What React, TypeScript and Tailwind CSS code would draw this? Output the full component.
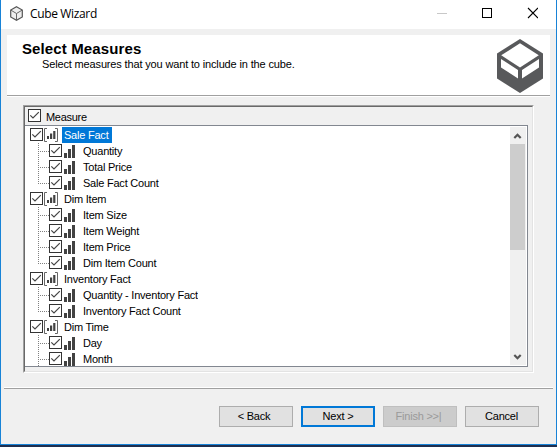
const groups = [
  { name: "Sale Fact", items: ["Quantity", "Total Price", "Sale Fact Count"], selected: true },
  { name: "Dim Item", items: ["Item Size", "Item Weight", "Item Price", "Dim Item Count"] },
  { name: "Inventory Fact", items: ["Quantity - Inventory Fact", "Inventory Fact Count"] },
  { name: "Dim Time", items: ["Day", "Month"], open: true },
];

function Check() {
  return (
    <svg width="13" height="13" viewBox="0 0 13 13" className="block shrink-0">
      <rect x="0.5" y="0.5" width="12" height="12" fill="#fff" stroke="#333" />
      <path d="M2.3 6.3 5 9 10.800 3.200" fill="none" stroke="#444" strokeWidth="1.2" />
    </svg>
  );
}

function GroupIcon() {
  return (
    <svg width="14" height="14" viewBox="0 0 14 14" className="ml-px block shrink-0">
      <path d="M3 0.5H0.5V13.5H3M11 0.5H13.5V13.5H11" fill="none" stroke="#666" />
      <path d="M3 8h2v3H3zM6 5.500h2.200v5.500H6zM9.200 3h2.200v8H9.200z" fill="#424242" />
    </svg>
  );
}

function BarsIcon() {
  return (
    <svg width="11" height="13" viewBox="0 0 11 13" className="ml-0.5 mt-px block shrink-0" shapeRendering="crispEdges">
      <path d="M0 8h3v5H0zM4 4h3v9H4zM8 0h3v13H8z" fill="#424242" />
    </svg>
  );
}

function Branch({ last }: { last: boolean }) {
  return (
    <svg width="11" height="16" viewBox="0 0 11 16" className="block shrink-0" shapeRendering="crispEdges">
      <path d={last ? "M0.5 0V9" : "M0.5 0V16"} stroke="#808080" strokeDasharray="1 1" />
      <path d="M2 8.5H11" stroke="#808080" strokeDasharray="1 1" />
    </svg>
  );
}

function Cube({ className }: { className: string }) {
  return (
    <svg viewBox="0 0 46 54" preserveAspectRatio="none" className={className}>
      <path d="M23 0 46 14.500V39.500L23 54 0 39.500V14.500Z" fill="#58595b" />
      <path d="M23 4.300 41.800 16.300 23 28.400 4.200 16.300Z" fill="#fff" />
      <path d="M4 20 21 31V39.500L4 28.500ZM42 20 25 31V39.500L42 28.500Z" fill="#fff" />
    </svg>
  );
}

export default function App() {
  return (
    <div className="flex h-[447px] w-[557px] flex-col bg-[#1f2f4f] font-['Liberation_Sans',sans-serif] text-[11px] tracking-[-0.22px] text-black">
      <div className="flex h-[445px] flex-col border border-t-0 border-[#1883d7] bg-[#f0f0f0]">
        <header className="flex h-[29px] shrink-0 items-start bg-white pt-[6px]">
          <svg width="13" height="15" viewBox="0 0 13 15" className="ml-[9px] block">
            <path d="M6.500 0.700 12.300 4V11L6.500 14.300 0.700 11V4Z" fill="#eee" stroke="#555" strokeWidth="1.200" />
            <path d="M1 4.200 6.500 7.500 12 4.200M6.500 7.500V14" fill="none" stroke="#666" />
          </svg>
          <h1 className="ml-[7px] w-[406px] font-['Open_Sans',sans-serif] text-[12px] leading-[15px] tracking-[-0.35px]">Cube Wizard</h1>
          <svg width="102" height="14" viewBox="0 0 102 14" className="block">
            <path d="M1 7.500H11" stroke="#c8c8c8" shapeRendering="crispEdges" />
            <rect x="46.500" y="2.500" width="9" height="9" fill="none" stroke="#000" shapeRendering="crispEdges" />
            <path d="M92 2 102 12M102 2 92 12" stroke="#000" strokeWidth="1.100" />
          </svg>
        </header>

        <section className="mx-[6px] mt-[6px] flex h-[62px] shrink-0 justify-between border-b border-white bg-white">
          <div className="flex h-[61px] grow justify-between border-b border-[#a0a0a0]">
            <div className="pl-[15px] pt-[6px]">
              <h2 className="text-[15px] font-bold leading-[16px] tracking-[0.12px]">Select Measures</h2>
              <p className="pl-[20px] pt-px leading-[13px] tracking-[-0.15px]">Select measures that you want to include in the cube.</p>
            </div>
            <Cube className="mr-[7px] mt-[4px] h-[54px] w-[46px]" />
          </div>
        </section>

        <main className="ml-[22px] mt-[8px] h-[268px] w-[511px] shrink-0 border border-b-white border-l-[#a0a0a0] border-r-white border-t-[#a0a0a0]">
          <div className="flex h-[266px] flex-col border border-b-[#e3e3e3] border-l-[#696969] border-r-[#e3e3e3] border-t-[#696969]">
            <div className="flex h-[18px] shrink-0 items-start pl-[3px] pt-[2px]">
              <Check />
              <span className="ml-[5px] leading-[16px] tracking-[-0.3px]">Measure</span>
            </div>
            <div className="flex h-[242px] w-[503px] justify-between border border-l-0 border-[#828790] bg-white">
              <div className="h-[240px] overflow-hidden pl-[5px] pt-px">
                {groups.map((g) => (
                  <div key={g.name}>
                    <div className="flex h-4 items-start pt-px">
                      <Check />
                      <GroupIcon />
                      <span className={`-mt-px ml-1 flex h-4 items-center pl-[2px] pr-[3px] ${g.selected ? "bg-[#0078d7] text-white" : ""}`}>
                        {g.name}
                      </span>
                    </div>
                    {g.items.map((t, i) => (
                      <div key={t} className="flex h-4 items-start pl-2">
                        <Branch last={i === g.items.length - 1 && !g.open} />
                        <div className="flex pt-px">
                          <Check />
                          <BarsIcon />
                        </div>
                        <span className="ml-[8px] leading-[16px]">{t}</span>
                      </div>
                    ))}
                  </div>
                ))}
              </div>
              <div className="mr-px mt-px flex h-[238px] w-4 flex-col bg-[#f0f0f0]">
                <svg width="16" height="17" viewBox="0 0 16 17" className="block">
                  <path d="M4.300 11 7.500 7.800 10.700 11" fill="none" stroke="#555" strokeWidth="2.200" />
                </svg>
                <div className="h-[106px] w-[15px] bg-[#cdcdcd]" />
                <svg width="16" height="17" viewBox="0 0 16 17" className="mt-auto block">
                  <path d="M4.300 7 7.500 10.200 10.700 7" fill="none" stroke="#555" strokeWidth="2.200" />
                </svg>
              </div>
            </div>
          </div>
        </main>

        <div className="mx-[3px] mt-[14px] h-[2px] shrink-0 border-b border-t border-b-[#a0a0a0] border-t-white" />
        <footer className="mt-[17px] flex justify-end gap-2 pr-[17px]">
          <button className="h-[21px] w-[74px] border border-[#adadad] bg-[#e1e1e1] pr-1">&lt; Back</button>
          <button className="h-[21px] w-[74px] border-2 border-[#0078d7] bg-[#e1e1e1]">Next &gt;</button>
          <button className="h-[21px] w-[74px] border border-[#bfbfbf] bg-[#ccc] pr-[3px] text-[#9a9a9a]">Finish &gt;&gt;|</button>
          <button className="h-[21px] w-[74px] border border-[#adadad] bg-[#e1e1e1] pr-px">Cancel</button>
        </footer>
      </div>
    </div>
  );
}
